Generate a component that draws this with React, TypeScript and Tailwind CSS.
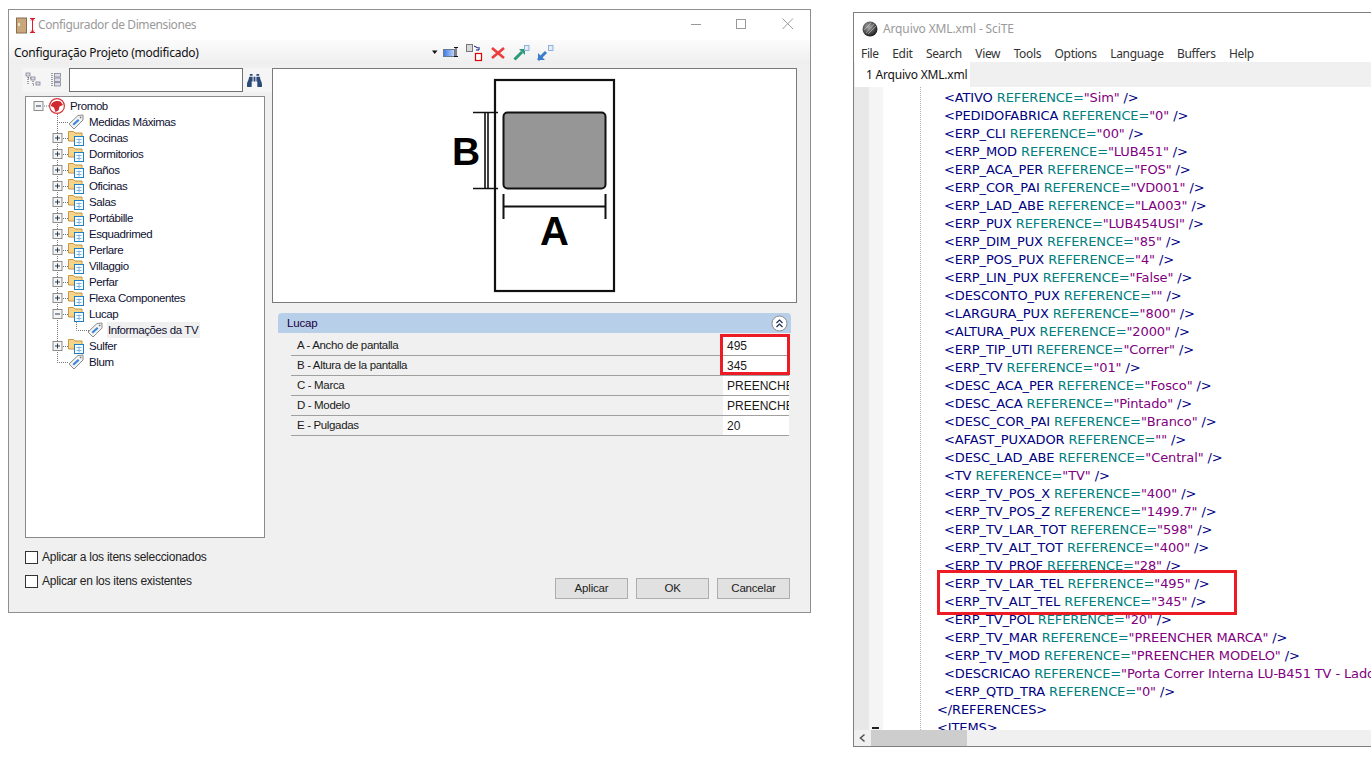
import React from "react";
import { FaBinoculars } from "react-icons/fa";

const ui = { fontFamily: '"Noto Sans", "Liberation Sans", sans-serif' };
const tree = { fontFamily: '"Liberation Sans", Arial, sans-serif' };
const mono = { fontFamily: '"DejaVu Sans", Verdana, sans-serif' };

type Kind = "root" | "tag" | "folder";
type Row = { t: string; lvl: number; kind: Kind; exp?: "+" | "-"; last?: boolean; sel?: boolean };

const rows: Row[] = [
  { t: "Promob", lvl: 0, kind: "root", exp: "-" },
  { t: "Medidas Máximas", lvl: 1, kind: "tag" },
  { t: "Cocinas", lvl: 1, kind: "folder", exp: "+" },
  { t: "Dormitorios", lvl: 1, kind: "folder", exp: "+" },
  { t: "Baños", lvl: 1, kind: "folder", exp: "+" },
  { t: "Oficinas", lvl: 1, kind: "folder", exp: "+" },
  { t: "Salas", lvl: 1, kind: "folder", exp: "+" },
  { t: "Portábille", lvl: 1, kind: "folder", exp: "+" },
  { t: "Esquadrimed", lvl: 1, kind: "folder", exp: "+" },
  { t: "Perlare", lvl: 1, kind: "folder", exp: "+" },
  { t: "Villaggio", lvl: 1, kind: "folder", exp: "+" },
  { t: "Perfar", lvl: 1, kind: "folder", exp: "+" },
  { t: "Flexa Componentes", lvl: 1, kind: "folder", exp: "+" },
  { t: "Lucap", lvl: 1, kind: "folder", exp: "-" },
  { t: "Informações da TV", lvl: 2, kind: "tag", sel: true },
  { t: "Sulfer", lvl: 1, kind: "folder", exp: "+" },
  { t: "Blum", lvl: 1, kind: "tag", last: true },
];

function Expander({ cx, sign }: { cx: number; sign: "+" | "-" }) {
  return (
    <g>
      <rect x={cx - 4.5} y={3.5} width={9} height={9} fill="#f4f4f4" stroke="#8c8c8c" />
      <path d={sign === "+" ? `M${cx - 2.5} 8h5M${cx} 5.5v5` : `M${cx - 2.5} 8h5`} stroke="#2b3a55" fill="none" />
    </g>
  );
}

function Tag({ x }: { x: number }) {
  return (
    <g transform={`translate(${x},0)`}>
      <path d="M1 10 L10 1.5 L15 1 L15 6 L6 15 Z" fill="#f4f4f4" stroke="#8a8a8a" />
      <path d="M4.5 10 L10 5 L11.5 6.5 L6 11.5 Z" fill="#3d85d8" />
      <circle cx="12.6" cy="3.4" r="0.9" fill="#777" />
    </g>
  );
}

function Folder({ x }: { x: number }) {
  return (
    <g transform={`translate(${x},0)`}>
      <path d="M0.5 1.5 h5 l1.5 1.5 h7 v8 h-13.5 Z" fill="#f5d58c" stroke="#c8963e" />
      <rect x="6.5" y="6.5" width="9" height="9" fill="#fff" stroke="#1d7fc4" />
      <path d="M8.5 9.5h5M8.5 12.5h5M11 8.5v6" stroke="#7fb4dd" fill="none" />
    </g>
  );
}

function TreeRow({ r }: { r: Row }) {
  const w = r.lvl === 0 ? 43 : r.lvl === 1 ? 62 : 80;
  const dot = "#777";
  return (
    <div className="flex h-4 items-center">
      <svg width={w} height={16} className="shrink-0">
        {r.lvl === 0 && (
          <g>
            <path d="M17 8h6" stroke={dot} strokeDasharray="1 1" />
            <Expander cx={11.5} sign="-" />
            <circle cx="30" cy="8" r="7.4" fill="#fff" stroke="#d8353a" strokeWidth="1.2" />
            <path d="M24 8 C24 3.5 30 2 33.5 3.5 L36 7 L32.5 8.5 L31.5 12.5 L28.5 14 L27 9.5 Z" fill="#d02a30" />
          </g>
        )}
        {r.lvl >= 1 && (
          <path d={r.last ? "M30.5 0V8" : "M30.5 0V16"} stroke={dot} strokeDasharray="1 1" />
        )}
        {r.lvl === 1 && <path d="M30 8.5h11" stroke={dot} strokeDasharray="1 1" />}
        {r.lvl === 2 && <path d="M49.5 0V8.5H62" stroke={dot} strokeDasharray="1 1" fill="none" />}
        {r.lvl === 1 && r.exp && <Expander cx={30.5} sign={r.exp} />}
        {r.lvl === 1 && r.kind === "folder" && <Folder x={41} />}
        {r.lvl === 1 && r.kind === "tag" && <Tag x={41} />}
        {r.lvl === 2 && <Tag x={60} />}
      </svg>
      <span className={`whitespace-nowrap text-[11.5px] leading-4 tracking-[-0.4px] text-[#101030] ${r.sel ? "bg-[#f0f0f0] pl-[1px] pr-[2px]" : ""}`}>
        {r.t}
      </span>
    </div>
  );
}

function Diagram() {
  return (
    <svg width="200" height="230" viewBox="0 0 200 230" className="absolute left-[157px] top-[1px]">
      <rect x="65" y="10" width="119" height="211" fill="#fff" stroke="#111" strokeWidth="2.2" />
      <rect x="73.5" y="42.5" width="102" height="76" rx="4" fill="#969696" stroke="#111" strokeWidth="2" />
      <path d="M43 42.5H68M43 118.5H68M55 42.5V118.5M58 42.5V118.5" stroke="#111" strokeWidth="1.6" fill="none" />
      <path d="M73.5 124V149M175.5 124V149M73.5 136.5H175.5" stroke="#111" strokeWidth="2" fill="none" />
      <text x="22" y="95" fontSize="39" fontWeight="700" fill="#000" style={tree}>B</text>
      <text x="110" y="175" fontSize="40" fontWeight="700" fill="#000" style={tree}>A</text>
    </svg>
  );
}

function ToolIcons() {
  return (
    <div className="ml-[4px] flex items-center gap-[7px]">
      <svg width="16" height="14" viewBox="0 0 16 14">
        <defs>
          <linearGradient id="tb" x1="0" x2="1">
            <stop offset="0" stopColor="#3c78e8" />
            <stop offset="1" stopColor="#c4d6f5" />
          </linearGradient>
        </defs>
        <rect x="0.5" y="3.5" width="11" height="7" fill="url(#tb)" stroke="#6a7a90" />
        <path d="M11 1.5h4M13 1.5v9M11 10.5h4" stroke="#111" fill="none" />
      </svg>
      <svg width="17" height="18" viewBox="0 0 17 18">
        <rect x="0.5" y="0.5" width="6" height="7" fill="#d8d8d8" stroke="#777" />
        <rect x="9.5" y="9.5" width="6" height="7" fill="#fff" stroke="#e00000" strokeWidth="1.2" />
        <path d="M8 2 L12 4 M10 6 H13 V3" stroke="#101080" fill="none" />
      </svg>
      <svg width="16" height="14" viewBox="0 0 16 14">
        <path d="M2 2 L14 12 M14 2 L2 12" stroke="#ee3b3b" strokeWidth="2.6" />
      </svg>
      <svg width="17" height="16" viewBox="0 0 17 16">
        <path d="M1.5 14.5 L9 7" stroke="#2a9a78" strokeWidth="3" />
        <path d="M6 4 H12 V10 Z" fill="#2a9a78" />
        <rect x="11.5" y="0.5" width="4.5" height="5" fill="#e4ecf8" stroke="#8fb0dc" />
      </svg>
      <svg width="17" height="16" viewBox="0 0 17 16">
        <path d="M1 15 L9 7" stroke="#3c7ccc" strokeWidth="3" />
        <path d="M1 8 V15 H8 Z" fill="#3c7ccc" />
        <rect x="11.5" y="0.5" width="4.5" height="5" fill="#e4ecf8" stroke="#8fb0dc" />
      </svg>
    </div>
  );
}

const props = [
  ["A - Ancho de pantalla", "495"],
  ["B - Altura de la pantalla", "345"],
  ["C - Marca", "PREENCHER"],
  ["D - Modelo", "PREENCHER"],
  ["E - Pulgadas", "20"],
];

function Btn({ children }: { children: React.ReactNode }) {
  return (
    <div className="flex h-[21px] w-[73px] items-center justify-center border border-[#adadad] bg-[#e1e1e1] text-[11.5px] tracking-[-0.2px] text-[#222]">
      {children}
    </div>
  );
}

function Check({ label }: { label: string }) {
  return (
    <div className="flex items-center gap-[4px]">
      <div className="h-[13px] w-[13px] border border-[#333] bg-white" />
      <span className="text-[12px] leading-4 tracking-[-0.27px] text-[#222]">{label}</span>
    </div>
  );
}

function LeftWindow() {
  return (
    <div className="ml-[8px] mt-[9px] flex h-[604px] w-[803px] shrink-0 flex-col border border-[#8f8f8f] bg-[#f0f0f0]" style={tree}>
      <div className="flex h-[30px] shrink-0 items-center bg-white pl-[7px]">
        <svg width="20" height="17" viewBox="0 0 20 17">
          <rect x="0.5" y="1" width="10" height="15" fill="#c9a77c" stroke="#8a6d4a" />
          <rect x="2" y="6" width="2" height="3" fill="#efe3d0" />
          <path d="M14 1.5h5M16.5 1.5V15.5M14 15.5h5M15 3.5l1.5-2 1.5 2M15 13.5l1.5 2 1.5-2" stroke="#e01a2b" fill="none" />
        </svg>
        <span className="ml-[2px] text-[12px] tracking-[-0.4px] text-[#9a9a9a]" style={ui}>Configurador de Dimensiones</span>
        <div className="mb-[2px] ml-auto flex items-center">
          <svg width="45" height="12" viewBox="0 0 45 12"><path d="M0 6.5H10" stroke="#9a9a9a" /></svg>
          <svg width="46" height="12" viewBox="0 0 46 12"><rect x="0.5" y="1.5" width="9" height="9" fill="none" stroke="#9a9a9a" /></svg>
          <svg width="28" height="12" viewBox="0 0 28 12"><path d="M0.5 0.5L11 11M11 0.5L0.5 11" stroke="#9a9a9a" /></svg>
        </div>
      </div>
      <div className="flex h-[24px] shrink-0 items-center bg-[linear-gradient(#fcfcfc,#eeeeee)] pl-[5px] pt-[1px]">
        <span className="w-[415px] whitespace-nowrap text-[12px] tracking-[-0.25px] text-[#111]" style={ui}>Configuração Projeto (modificado)</span>
        <svg width="8" height="5" viewBox="0 0 8 5" className="ml-[2px]"><path d="M1 0.5H6.5L3.7 4Z" fill="#111" /></svg>
        <ToolIcons />
      </div>
      <div className="flex min-h-0 flex-1 pl-[13px] pt-[4px]">
        <div className="flex w-[250px] shrink-0 flex-col">
          <div className="flex h-[24px] items-center bg-[#f5f5f5]">
            <svg width="16" height="16" viewBox="0 0 16 16" className="ml-[3px]">
              <path d="M3 3V13M3 6H7M8 9V13H10" stroke="#555" strokeDasharray="1 1" fill="none" />
              <rect x="1" y="1" width="4" height="3" fill="#dde" stroke="#778" strokeWidth="0.7" />
              <rect x="6" y="5" width="4" height="3" fill="#dde" stroke="#778" strokeWidth="0.7" />
              <rect x="11" y="10" width="4" height="3" fill="#dde" stroke="#778" strokeWidth="0.7" />
            </svg>
            <svg width="14" height="16" viewBox="0 0 14 16" className="ml-[9px]">
              <path d="M2 1V15" stroke="#444" strokeDasharray="1 1" />
              <rect x="4.5" y="1.5" width="6" height="3.5" fill="#dde" stroke="#778" strokeWidth="0.7" />
              <rect x="4.5" y="6" width="6" height="3.5" fill="#dde" stroke="#778" strokeWidth="0.7" />
              <rect x="4.5" y="10.5" width="6" height="3.5" fill="#dde" stroke="#778" strokeWidth="0.7" />
            </svg>
            <div className="ml-[5px] h-[24px] w-[174px] border border-[#707070] bg-white" />
            <FaBinoculars className="ml-[4px] text-[#2c4a78]" size={15} />
          </div>
          <div className="ml-[3px] mt-[4px] h-[442px] w-[240px] overflow-hidden border border-[#8a8a8a] bg-white pl-[1px] pt-[1px]">
            {rows.map((r) => (
              <TreeRow key={r.t} r={r} />
            ))}
          </div>
          <div className="ml-[3px] mt-[11px] flex flex-col gap-[8px]">
            <Check label="Aplicar a los itens seleccionados" />
            <Check label="Aplicar en los itens existentes" />
          </div>
        </div>
        <div className="flex min-w-0 flex-1 flex-col pr-[13px]">
          <div className="relative h-[235px] w-[525px] shrink-0 overflow-hidden border border-[#7a7a7a] bg-white">
            <Diagram />
          </div>
          <div className="relative ml-[6px] mt-[10px] w-[513px]">
            <div className="flex h-[20px] items-center justify-between rounded-t-[4px] bg-[#b8cfe9] pl-[9px] pr-[3px] pt-[1px] text-[11.5px] tracking-[-0.2px] text-[#200040]">
              <span>Lucap</span>
              <svg width="17" height="17" viewBox="0 0 17 17">
                <circle cx="8.5" cy="8.5" r="7.5" fill="#fff" stroke="#8a8a8a" />
                <path d="M5.5 8L8.5 5L11.5 8M5.5 12L8.5 9L11.5 12" stroke="#1d2d50" strokeWidth="1.2" fill="none" />
              </svg>
            </div>
            <div className="ml-[13px] mr-[2px] mt-[3px]">
              {props.map(([k, v]) => (
                <div key={k} className="flex h-[20px] border-b border-[#a0a0a0] pt-[1px] text-[11.5px] tracking-[-0.35px] text-[#1a1a1a]">
                  <span className="flex-1 self-center pl-[6px]">{k}</span>
                  <span className="-mt-[1px] flex w-[66px] items-center overflow-hidden whitespace-nowrap bg-white pl-[4px] pt-[1px] text-[12px] tracking-normal">{v}</span>
                </div>
              ))}
            </div>
            <div className="absolute left-[442px] top-[21px] h-[41px] w-[70px] border-[3px] border-[#ed1c24]" />
          </div>
          <div className="mb-[13px] mt-auto flex justify-end gap-[8px] pr-[7px]">
            <Btn>Aplicar</Btn>
            <Btn>OK</Btn>
            <Btn>Cancelar</Btn>
          </div>
        </div>
      </div>
    </div>
  );
}

type Line = [string, string];
const lines: Line[] = [
  ["ATIVO", "Sim"], ["PEDIDOFABRICA", "0"], ["ERP_CLI", "00"], ["ERP_MOD", "LUB451"], ["ERP_ACA_PER", "FOS"],
  ["ERP_COR_PAI", "VD001"], ["ERP_LAD_ABE", "LA003"], ["ERP_PUX", "LUB454USI"], ["ERP_DIM_PUX", "85"], ["ERP_POS_PUX", "4"],
  ["ERP_LIN_PUX", "False"], ["DESCONTO_PUX", ""], ["LARGURA_PUX", "800"], ["ALTURA_PUX", "2000"], ["ERP_TIP_UTI", "Correr"],
  ["ERP_TV", "01"], ["DESC_ACA_PER", "Fosco"], ["DESC_ACA", "Pintado"], ["DESC_COR_PAI", "Branco"], ["AFAST_PUXADOR", ""],
  ["DESC_LAD_ABE", "Central"], ["TV", "TV"], ["ERP_TV_POS_X", "400"], ["ERP_TV_POS_Z", "1499.7"], ["ERP_TV_LAR_TOT", "598"],
  ["ERP_TV_ALT_TOT", "400"], ["ERP_TV_PROF", "28"], ["ERP_TV_LAR_TEL", "495"], ["ERP_TV_ALT_TEL", "345"], ["ERP_TV_POL", "20"],
  ["ERP_TV_MAR", "PREENCHER MARCA"], ["ERP_TV_MOD", "PREENCHER MODELO"],
  ["DESCRICAO", "Porta Correr Interna LU-B451 TV - Lado"], ["ERP_QTD_TRA", "0"],
];

function RightWindow() {
  return (
    <div className="ml-[42px] mt-[12px] flex h-[735px] w-[518px] shrink-0 flex-col overflow-hidden border border-r-0 border-[#7f7f7f] bg-white" style={ui}>
      <div className="flex h-[30px] shrink-0 items-center pl-[8px] pt-[2px]">
        <svg width="16" height="16" viewBox="0 0 16 16">
          <defs>
            <radialGradient id="gb" cx="0.4" cy="0.35" r="0.7">
              <stop offset="0" stopColor="#aaa" />
              <stop offset="1" stopColor="#111" />
            </radialGradient>
          </defs>
          <circle cx="8" cy="8" r="7.5" fill="url(#gb)" />
          <path d="M4 12L12 3M6 13L14 5M2 9L9 2" stroke="#ccc" strokeWidth="0.6" />
        </svg>
        <span className="ml-[5px] text-[12px] tracking-[-0.13px] text-[#9a9a9a]">Arquivo XML.xml - SciTE</span>
      </div>
      <div className="flex h-[19px] shrink-0 items-center gap-[13.5px] pl-[7px] pt-[2px] text-[12px] tracking-[-0.35px] text-[#333]">
        {["File", "Edit", "Search", "View", "Tools", "Options", "Language", "Buffers", "Help"].map((m) => (
          <span key={m}>{m}</span>
        ))}
      </div>
      <div className="flex h-[25px] shrink-0 items-end bg-[#f0f0f0] pl-[1px]">
        <div className="flex h-[25px] w-[115px] shrink-0 items-center whitespace-nowrap bg-white pl-[11px] text-[12px] tracking-[-0.2px] text-[#111]">1 Arquivo XML.xml</div>
      </div>
      <div className="relative flex min-h-0 flex-1 overflow-hidden">
        <div className="w-[15px] shrink-0 bg-[#e8e8e8]" />
        <div className="relative w-[14px] shrink-0 bg-[#f5f5f5]">
          <div className="absolute bottom-[1px] left-[3px] h-[2px] w-[7px] bg-[#222]" />
        </div>
        <div className="w-[38px] shrink-0 border-r border-dotted border-[#b0b0b0]" />
        <div className="min-w-0 flex-1 overflow-hidden whitespace-nowrap pt-[2px] text-[13px] leading-[18px] tracking-[-0.12px]" style={mono}>
          {lines.map(([n, v]) => (
            <div key={n} className="h-[18px] pl-[23px] text-[#00007f]">
              {"<"}{n} <span className="text-[#008080]">REFERENCE=</span>
              <span className="text-[#7f007f]">"{v}"</span> {"/>"}
            </div>
          ))}
          <div className="h-[18px] pl-[16px] text-[#00007f]">{"</REFERENCES>"}</div>
          <div className="h-[18px] pl-[16px] text-[#00007f]">{"<ITEMS>"}</div>
        </div>
        <div className="absolute left-[83px] top-[483px] h-[45px] w-[300px] border-[3px] border-[#ed1c24]" />
      </div>
      <div className="flex h-[16px] shrink-0 items-center bg-[#f0f0f0]">
        <svg width="17" height="16" viewBox="0 0 17 16" className="shrink-0">
          <path d="M10.5 4.5L6.5 8L10.5 11.5" stroke="#555" strokeWidth="1.6" fill="none" />
        </svg>
        <div className="h-full w-[96px] bg-[#cdcdcd]" />
      </div>
    </div>
  );
}

export default function App() {
  return (
    <div className="flex h-[773px] w-[1371px] items-start overflow-hidden bg-white">
      <LeftWindow />
      <RightWindow />
    </div>
  );
}
